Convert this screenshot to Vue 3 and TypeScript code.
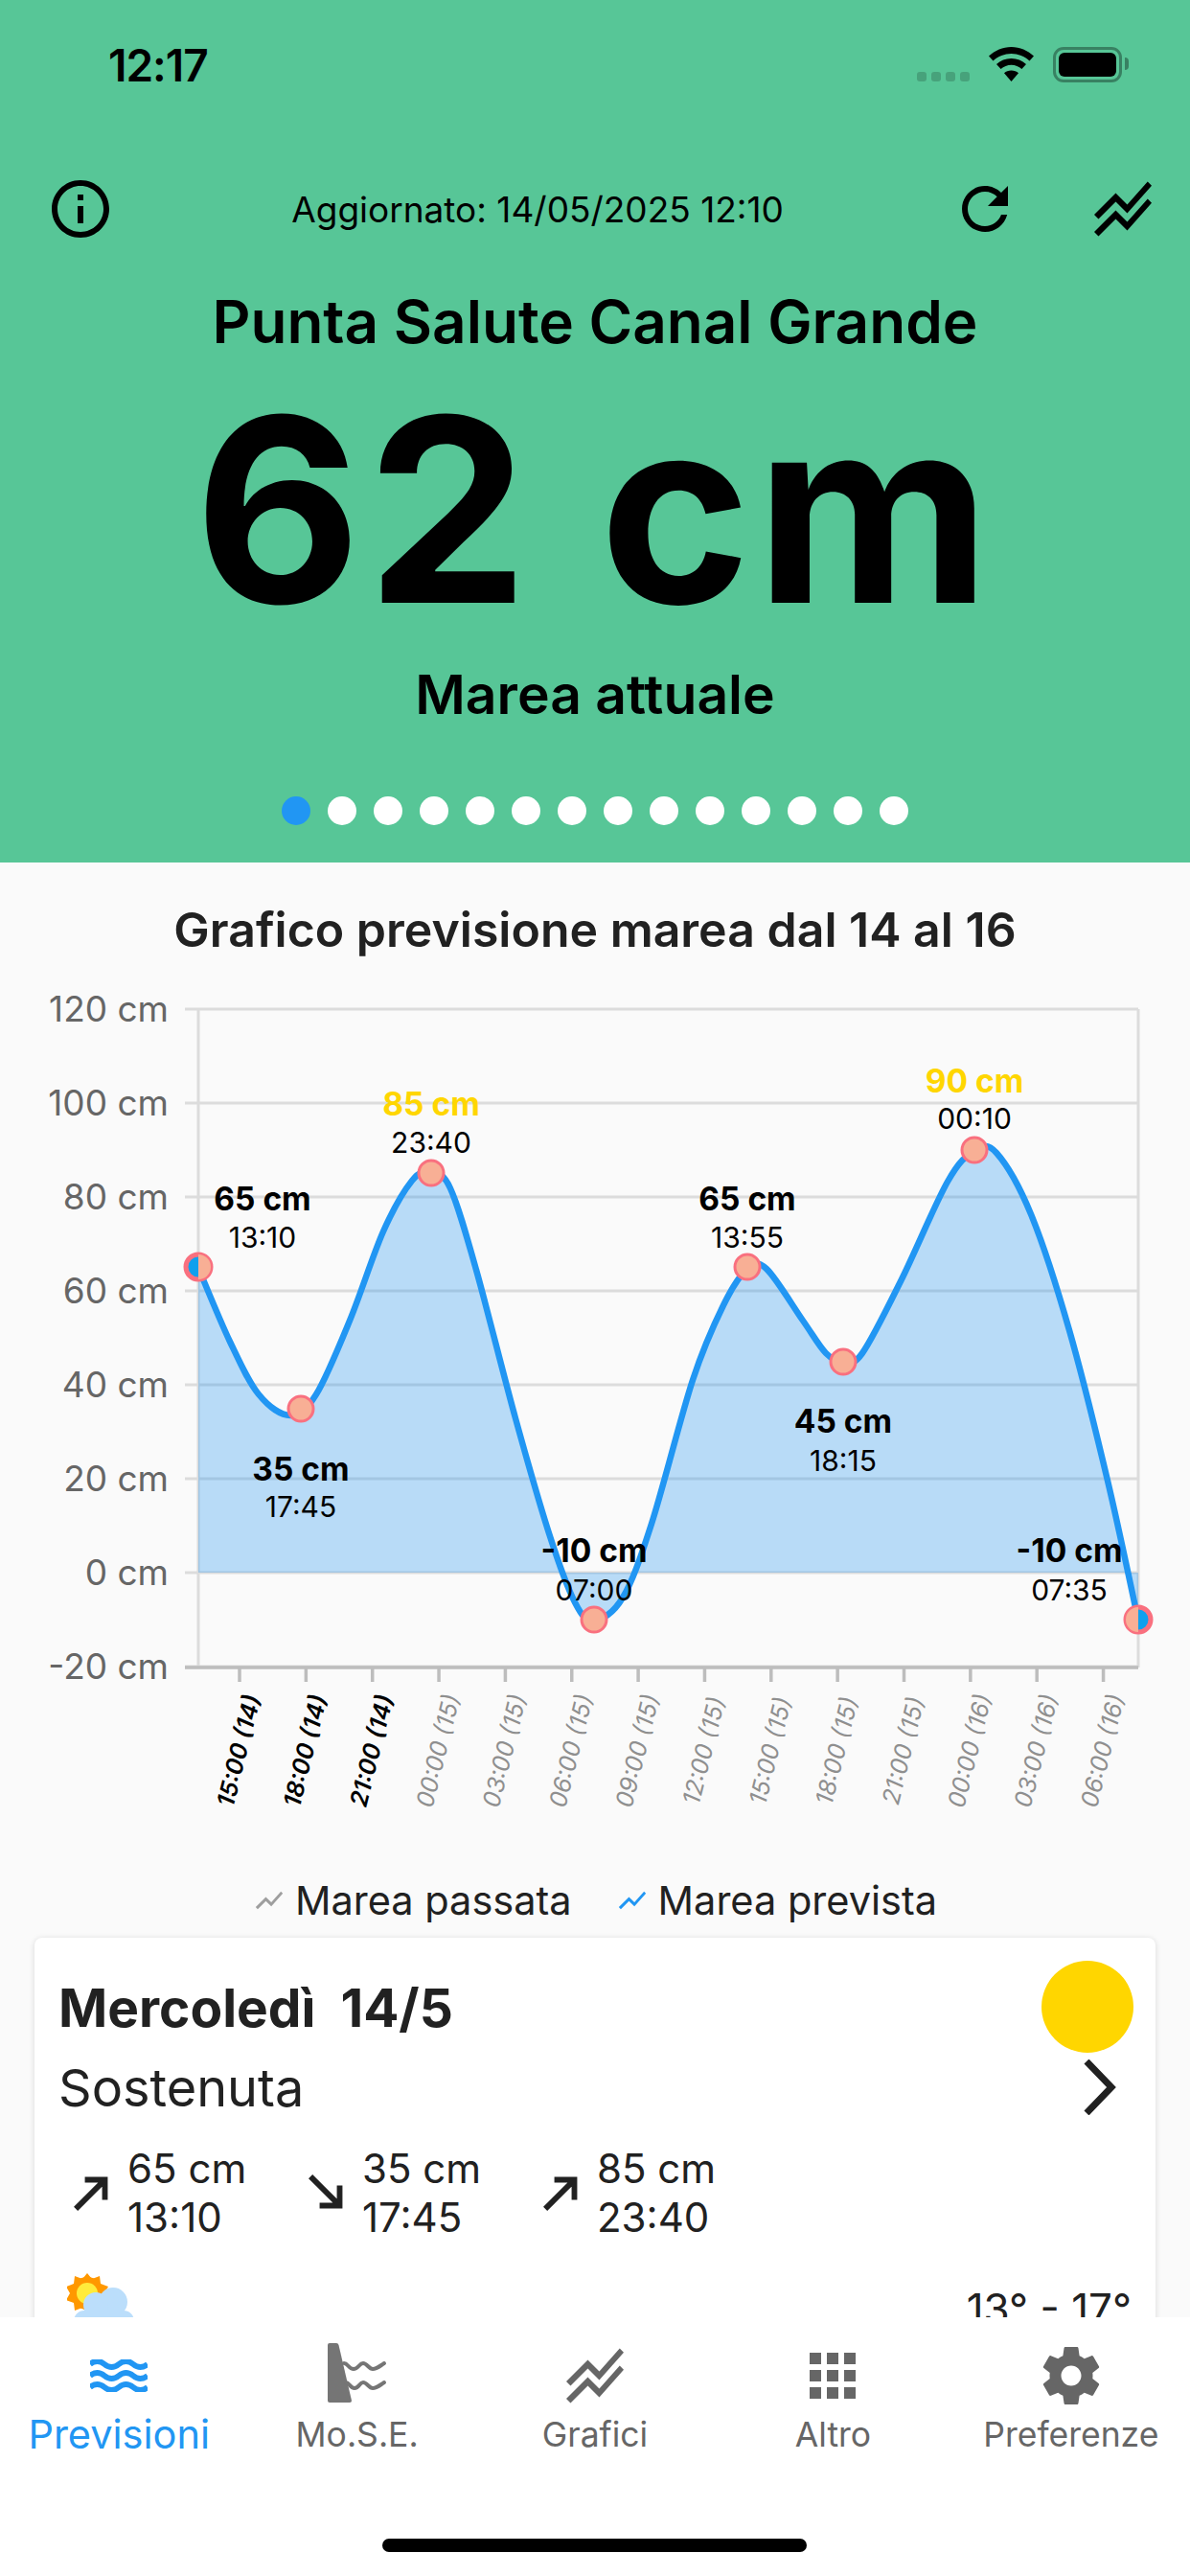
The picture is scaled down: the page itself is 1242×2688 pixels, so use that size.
<script setup lang="ts">
interface Tick {
  label: string
  past: boolean
}

interface Peak {
  x: number
  y: number
  value: string
  time: string
  valueY: number
  timeY: number
  high?: boolean
}

const gridValues = [120, 100, 80, 60, 40, 20, 0, -20]
const yFor = (v: number) => 1053 + (120 - v) * 4.9

const curve: [number, number][] = [
  [207, 1323], [240, 1400], [270, 1455], [303, 1477], [330, 1455], [365, 1378], [400, 1285],
  [430, 1232], [450, 1223], [470, 1240], [497, 1325], [538, 1480], [573, 1600], [600, 1672],
  [620, 1691], [650, 1667], [680, 1590], [723, 1440], [755, 1362], [780, 1324], [800, 1324],
  [838, 1378], [862, 1412], [880, 1421], [900, 1412], [941, 1335], [989, 1233], [1017, 1201],
  [1040, 1203], [1076, 1267], [1116, 1388], [1156, 1545], [1188, 1691]
]

// catmull-rom through the sampled points
const buildPath = (pts: [number, number][]) => {
  let d = `M${pts[0][0]} ${pts[0][1]}`
  for (let i = 0; i < pts.length - 1; i++) {
    const p0 = pts[i - 1] ?? pts[i]
    const p1 = pts[i]
    const p2 = pts[i + 1]
    const p3 = pts[i + 2] ?? p2
    const c1x = p1[0] + (p2[0] - p0[0]) / 6
    const c1y = p1[1] + (p2[1] - p0[1]) / 6
    const c2x = p2[0] - (p3[0] - p1[0]) / 6
    const c2y = p2[1] - (p3[1] - p1[1]) / 6
    d += `C${c1x.toFixed(1)} ${c1y.toFixed(1)} ${c2x.toFixed(1)} ${c2y.toFixed(1)} ${p2[0]} ${p2[1]}`
  }
  return d
}

const linePath = buildPath(curve)
const areaPath = `M207 ${yFor(0)}L207 1323${linePath.slice(linePath.indexOf('C'))}L1188 ${yFor(0)}Z`

const hours = ['15:00 (14)', '18:00 (14)', '21:00 (14)', '00:00 (15)', '03:00 (15)', '06:00 (15)', '09:00 (15)', '12:00 (15)', '15:00 (15)', '18:00 (15)', '21:00 (15)', '00:00 (16)', '03:00 (16)', '06:00 (16)']
const ticks: Tick[] = hours.map((label, i) => ({ label, past: i < 3 }))
const tickX = (i: number) => 250 + i * 69.35

const peaks: Peak[] = [
  { x: 207, y: 1322, value: '65 cm', time: '13:10', valueY: 1263, timeY: 1302 },
  { x: 314, y: 1470, value: '35 cm', time: '17:45', valueY: 1545, timeY: 1583 },
  { x: 450, y: 1224, value: '85 cm', time: '23:40', valueY: 1164, timeY: 1203, high: true },
  { x: 620, y: 1690, value: '-10 cm', time: '07:00', valueY: 1630, timeY: 1670 },
  { x: 780, y: 1322, value: '65 cm', time: '13:55', valueY: 1263, timeY: 1302 },
  { x: 880, y: 1421, value: '45 cm', time: '18:15', valueY: 1495, timeY: 1535 },
  { x: 1017, y: 1200, value: '90 cm', time: '00:10', valueY: 1140, timeY: 1178, high: true },
  { x: 1188, y: 1690, value: '-10 cm', time: '07:35', valueY: 1630, timeY: 1670 }
]
const labelX = (p: Peak) => (p.x === 207 ? 274 : p.x === 1188 ? 1116 : p.x)

const tides = [
  { up: true, value: '65 cm', time: '13:10' },
  { up: false, value: '35 cm', time: '17:45' },
  { up: true, value: '85 cm', time: '23:40' }
]
const dots = Array.from({ length: 14 }, (_, i) => i)
const dayLabel = 'Mercoledì  14/5'
</script>

<template>
  <div class="page">
    <header class="hero">
      <div class="status">
        <span class="clock">12:17</span>
        <div class="status__right">
          <div class="signal"><i v-for="n in 4" :key="n"></i></div>
          <svg class="wifi" viewBox="0 0 47 36">
            <path d="M23.5 0C14.5 0 6.5 3.6 0 9.5l4.5 5C9.8 9.8 16.3 7 23.5 7s13.7 2.800 19 7.500l4.500-5C40.500 3.600 32.500 0 23.500 0z" />
            <path d="M23.500 12c-6 0-11.300 2.300-15.500 6l4.600 5c3-2.600 6.800-4.200 10.900-4.200s7.900 1.600 10.900 4.200l4.600-5c-4.200-3.700-9.500-6-15.500-6z" />
            <path d="M23.500 24.500c-3 0-5.500 1-7.500 2.800L23.500 36l7.500-8.700c-2-1.800-4.500-2.800-7.500-2.800z" />
          </svg>
          <div class="battery"><div class="battery__fill"></div></div>
        </div>
      </div>

      <div class="toolbar">
        <svg class="toolbar__icon" viewBox="0 0 24 24"><path d="M11 7h2v2h-2zm0 4h2v6h-2zm1-9C6.48 2 2 6.48 2 12s4.48 10 10 10 10-4.48 10-10S17.520 2 12 2zm0 18c-4.410 0-8-3.590-8-8s3.590-8 8-8 8 3.590 8 8-3.590 8-8 8z" /></svg>
        <span class="toolbar__date">Aggiornato: 14/05/2025 12:10</span>
        <svg class="toolbar__icon toolbar__icon--refresh" viewBox="0 0 24 24"><path d="M17.650 6.350C16.200 4.900 14.210 4 12 4c-4.420 0-7.990 3.580-7.990 8s3.570 8 7.990 8c3.730 0 6.840-2.550 7.730-6h-2.080c-.82 2.330-3.040 4-5.650 4-3.310 0-6-2.690-6-6s2.690-6 6-6c1.660 0 3.140.69 4.220 1.780L13 11h7V4l-2.350 2.350z" /></svg>
        <svg class="toolbar__icon" viewBox="0 0 24 24"><path d="M2 19.990l7.500-7.510 4 4 7.090-7.970L22 9.920l-8.500 9.560-4-4-6 6.010L2 19.990zM3.500 15.490l6-6.010 4 4L22 3.920l-1.410-1.410-7.090 7.970-4-4L2 13.990l1.500 1.500z" /></svg>
      </div>

      <h1 class="hero__station">Punta Salute Canal Grande</h1>
      <div class="hero__level">62 cm</div>
      <div class="hero__caption">Marea attuale</div>
      <div class="pager">
        <span v-for="d in dots" :key="d" class="pager__dot" :class="{ isActive: d === 0 }"></span>
      </div>
    </header>

    <main class="scroller">
      <h2 class="chart-title">Grafico previsione marea dal 14 al 16</h2>
      <svg class="chart" viewBox="0 1010 1242 930">
        <defs>
          <clipPath id="plot"><rect x="207" y="1000" width="981" height="800" /></clipPath>
        </defs>
        <g v-for="v in gridValues" :key="v">
          <line class="grid" x1="193" x2="1188" :y1="yFor(v)" :y2="yFor(v)" />
          <text class="axis-y" x="176" :y="yFor(v) + 13">{{ v }} cm</text>
        </g>
        <line class="grid" x1="207" x2="207" y1="1053" y2="1740" />
        <line class="grid" x1="1188" x2="1188" y1="1053" y2="1740" />
        <line class="axis" x1="193" x2="1188" y1="1740" y2="1740" />
        <path :d="areaPath" class="area" />
        <path :d="linePath" class="line" />

        <g v-for="(t, i) in ticks" :key="i">
          <line class="axis" :x1="tickX(i)" :x2="tickX(i)" y1="1740" y2="1755" />
          <text
            class="axis-x"
            :class="{ isPast: t.past }"
            :x="tickX(i)"
            y="1835"
            :transform="`rotate(-76 ${tickX(i)} 1827)`"
          >{{ t.label }}</text>
        </g>

        <g v-for="(p, i) in peaks" :key="'p' + i">
          <circle v-if="p.x === 207 || p.x === 1188" class="marker-end" :cx="p.x" :cy="p.y" r="13" />
          <circle
            class="marker"
            :class="{ isEdge: p.x === 207 || p.x === 1188 }"
            :cx="p.x"
            :cy="p.y"
            r="13"
            clip-path="url(#plot)"
          />
          <text class="peak-value" :class="{ isHigh: p.high }" :x="labelX(p)" :y="p.valueY">{{ p.value }}</text>
          <text class="peak-time" :x="labelX(p)" :y="p.timeY">{{ p.time }}</text>
        </g>
      </svg>

      <div class="legend">
        <div class="legend__item">
          <svg class="legend__icon legend__icon--past" viewBox="0 0 24 24"><path d="M3.500 18.490l6-6.010 4 4L22 6.920l-1.410-1.410-7.090 7.970-4-4L2 16.990z" /></svg>
          <span>Marea passata</span>
        </div>
        <div class="legend__item">
          <svg class="legend__icon legend__icon--next" viewBox="0 0 24 24"><path d="M3.500 18.490l6-6.010 4 4L22 6.920l-1.410-1.410-7.090 7.970-4-4L2 16.990z" /></svg>
          <span>Marea prevista</span>
        </div>
      </div>

      <section class="card">
        <div class="card__head">
          <div>
            <div class="card__day">{{ dayLabel }}</div>
            <div class="card__state">Sostenuta</div>
          </div>
          <div class="card__side">
            <div class="card__sun"></div>
            <svg class="card__chevron" viewBox="0 0 35 58"><path d="M4 2l26 27L4 56" /></svg>
          </div>
        </div>
        <div class="tides">
          <div v-for="t in tides" :key="t.time" class="tide">
            <svg class="tide__arrow" viewBox="0 0 24 24">
              <path v-if="t.up" d="M9 5v2h6.590L4 18.590 5.410 20 17 8.410V15h2V5z" />
              <path v-else d="M19 9h-2v6.590L5.410 4 4 5.410 15.590 17H9v2h10z" />
            </svg>
            <div class="tide__text">
              <div>{{ t.value }}</div>
              <div>{{ t.time }}</div>
            </div>
          </div>
        </div>
        <div class="weather">
          <svg class="weather__icon" viewBox="0 0 74 74">
            <circle cx="21" cy="21" r="17" fill="#ff9800" />
            <path d="M21 0l5 6 8-3 1 8 8 3-4 7 4 7-8 3-1 8-8-3-5 6-5-6-8 3-1-8-8-3 4-7-4-7 8-3 1-8 8 3z" fill="#ff9800" />
            <circle cx="21" cy="21" r="11" fill="#ffeb3b" />
            <g fill="#bbdefb">
              <circle cx="48" cy="30" r="15" />
              <circle cx="30" cy="33" r="13" />
              <circle cx="18" cy="50" r="11" />
              <circle cx="59" cy="50" r="11" />
              <rect x="18" y="38" width="41" height="24" />
            </g>
          </svg>
          <span class="weather__temp">13° - 17°</span>
        </div>
      </section>
    </main>

    <nav class="tabbar">
      <div class="tabs">
        <div class="tab isActive">
          <svg class="tab__icon tab__icon--waves" viewBox="0 0 60 34">
            <path d="M0 5q7.500-6 15 0t15 0 15 0 15 0M0 17q7.500-6 15 0t15 0 15 0 15 0M0 29q7.500-6 15 0t15 0 15 0 15 0" />
          </svg>
          <span class="tab__label">Previsioni</span>
        </div>
        <div class="tab">
          <svg class="tab__icon tab__icon--mose" viewBox="0 0 62 62">
            <path class="mose-wall" d="M2 0h7q2 0 2.500 2L25 60q0 2-2 2H2q-2 0-2-2V2q0-2 2-2z" />
            <path class="mose-wave" d="M17 21c4 0 5 6 10 6s6-6 10-6 6 6 10 6 6-2 12-6M19 41c4 0 4 6 9 6s5-6 9-6 6 6 10 6 6-2 12-6" />
          </svg>
          <span class="tab__label">Mo.S.E.</span>
        </div>
        <div class="tab">
          <svg class="tab__icon" viewBox="0 0 24 24"><path d="M2 19.990l7.500-7.510 4 4 7.090-7.970L22 9.920l-8.500 9.560-4-4-6 6.010L2 19.990zM3.500 15.490l6-6.010 4 4L22 3.920l-1.410-1.410-7.090 7.970-4-4L2 13.990l1.500 1.500z" /></svg>
          <span class="tab__label">Grafici</span>
        </div>
        <div class="tab">
          <svg class="tab__icon" viewBox="0 0 24 24"><path d="M4 8h4V4H4v4zm6 12h4v-4h-4v4zm-6 0h4v-4H4v4zm0-6h4v-4H4v4zm6 0h4v-4h-4v4zm6-10v4h4V4h-4zm-6 4h4V4h-4v4zm6 6h4v-4h-4v4zm0 6h4v-4h-4v4z" /></svg>
          <span class="tab__label">Altro</span>
        </div>
        <div class="tab">
          <svg class="tab__icon" viewBox="0 0 24 24"><path d="M19.430 12.980c.04-.32.07-.64.07-.98s-.03-.66-.07-.98l2.110-1.650c.19-.15.24-.42.12-.64l-2-3.460c-.12-.22-.39-.3-.61-.22l-2.490 1c-.52-.4-1.080-.73-1.690-.98l-.38-2.650C14.460 2.180 14.250 2 14 2h-4c-.25 0-.46.18-.49.42l-.38 2.650c-.61.25-1.170.59-1.690.98l-2.490-1c-.23-.09-.49 0-.61.22l-2 3.460c-.13.22-.07.49.12.64l2.110 1.650c-.04.32-.07.65-.07.98s.03.66.07.98l-2.110 1.650c-.19.15-.24.42-.12.64l2 3.460c.12.22.39.3.61.22l2.490-1c.52.4 1.080.73 1.690.98l.38 2.650c.03.24.24.42.49.42h4c.25 0 .46-.18.49-.42l.38-2.650c.61-.25 1.170-.59 1.690-.98l2.490 1c.23.09.49 0 .61-.22l2-3.460c.12-.22.07-.49-.12-.64l-2.110-1.650zM12 15.500c-1.930 0-3.500-1.570-3.500-3.500s1.570-3.500 3.500-3.500 3.500 1.570 3.500 3.500-1.570 3.500-3.500 3.500z" /></svg>
          <span class="tab__label">Preferenze</span>
        </div>
      </div>
      <div class="home-bar"></div>
    </nav>
  </div>
</template>

<style scoped>
.page {
  display: flex;
  flex-direction: column;
  width: 1242px;
  height: 2688px;
  overflow: hidden;
  background: #fafafa;
  font-family: Inter, "Liberation Sans", sans-serif;
  color: #212121;
}

.hero {
  flex: none;
  display: flex;
  flex-direction: column;
  align-items: center;
  height: 900px;
  background: #57c697;
  color: #000;
}

.status {
  display: flex;
  justify-content: space-between;
  align-items: flex-start;
  width: 100%;
  height: 182px;
  padding: 49px 71px 0 113px;
  box-sizing: border-box;
}

.clock {
  margin-top: -4px;
  font-size: 46px;
  font-weight: 600;
  line-height: 46px;
  letter-spacing: -1px;
}

.status__right {
  display: flex;
  align-items: flex-start;
}

.signal {
  display: flex;
  gap: 5px;
  margin-top: 26px;
  margin-right: 20px;
}

.signal i {
  display: block;
  width: 10px;
  height: 10px;
  border-radius: 3px;
  background: rgba(0, 0, 0, 0.18);
}

.wifi {
  width: 47px;
  height: 36px;
  margin-right: 20px;
}

.battery {
  position: relative;
  width: 72px;
  height: 37px;
  box-sizing: border-box;
  border: 3px solid rgba(0, 0, 0, 0.35);
  border-radius: 11px;
  padding: 3px;
}

.battery::after {
  content: "";
  position: absolute;
  right: -10px;
  top: 8px;
  width: 4px;
  height: 13px;
  border-radius: 0 4px 4px 0;
  background: rgba(0, 0, 0, 0.35);
}

.battery__fill {
  height: 100%;
  border-radius: 6px;
  background: #000;
}

.toolbar {
  display: flex;
  align-items: center;
  width: 100%;
  height: 72px;
  padding: 0 34px 0 48px;
  box-sizing: border-box;
}

.toolbar__icon {
  flex: none;
  width: 72px;
  height: 72px;
}

.toolbar__icon--refresh {
  margin-right: 72px;
}

.toolbar__date {
  flex: 1;
  text-align: center;
  font-size: 37px;
  padding-left: 10px;
  white-space: nowrap;
}

.hero__station {
  margin: 48px 0 0;
  font-size: 62px;
  line-height: 68px;
  font-weight: 600;
}

.hero__level {
  margin-top: 28px;
  font-size: 268px;
  line-height: 268px;
  font-weight: 700;
  letter-spacing: 5.5px;
}

.hero__caption {
  margin-top: 28px;
  font-size: 57px;
  line-height: 62px;
  font-weight: 600;
}

.pager {
  display: flex;
  gap: 18px;
  margin-top: 75px;
}

.pager__dot {
  width: 30px;
  height: 30px;
  border-radius: 50%;
  background: #fff;
}

.pager__dot.isActive {
  background: #2196f3;
}

.scroller {
  flex: 1;
  min-height: 0;
  overflow: hidden;
}

.chart-title {
  margin: 44px 0 0;
  font-size: 50px;
  line-height: 52px;
  font-weight: 600;
  text-align: center;
}

.chart {
  display: block;
  width: 1242px;
  height: 930px;
  margin-top: 14px;
}

.grid {
  stroke: #dcdcdc;
  stroke-width: 3;
}

.axis {
  stroke: #bdbdbd;
  stroke-width: 3.500;
}

.area {
  fill: rgba(33, 150, 243, 0.3);
}

.line {
  fill: none;
  stroke: #2196f3;
  stroke-width: 6.500;
}

.axis-y {
  font-size: 37px;
  fill: #666;
  text-anchor: end;
}

.axis-x {
  font-size: 25px;
  font-style: italic;
  fill: #8f8f8f;
  text-anchor: middle;
}

.axis-x.isPast {
  font-weight: 600;
  fill: #000;
}

.marker {
  fill: #f8af95;
  stroke: #f9707f;
  stroke-width: 3;
}

.marker.isEdge {
  stroke: none;
}

.marker-end {
  fill: #0fa0ee;
  stroke: #f9707f;
  stroke-width: 5;
}

.peak-value {
  font-size: 33.500px;
  font-weight: 700;
  fill: #000;
  text-anchor: middle;
}

.peak-value.isHigh {
  fill: #ffd600;
}

.peak-time {
  font-size: 30px;
  fill: #000;
  text-anchor: middle;
}

.legend {
  display: flex;
  justify-content: center;
  align-items: center;
  gap: 46px;
  height: 60px;
  margin-top: 13px;
  font-size: 41.500px;
}

.legend__item {
  display: flex;
  align-items: center;
  gap: 10px;
}

.legend__icon {
  width: 34px;
  height: 34px;
}

.legend__icon--past {
  fill: #9e9e9e;
}

.legend__icon--next {
  fill: #2196f3;
}

.card {
  box-sizing: border-box;
  margin: 9px 36px 0;
  height: 500px;
  padding: 41px 25px 0 25px;
  background: #fff;
  border-radius: 8px;
  box-shadow: 0 1px 6px rgba(0, 0, 0, 0.14);
}

.card__head {
  display: flex;
  justify-content: space-between;
}

.card__day {
  font-size: 55px;
  line-height: 64px;
  font-weight: 700;
  white-space: pre;
}

.card__state {
  margin-top: 20px;
  font-size: 54px;
  line-height: 64px;
}

.card__side {
  display: flex;
  flex-direction: column;
  align-items: flex-end;
  margin-top: -17px;
}

.card__sun {
  width: 96px;
  height: 96px;
  border-radius: 50%;
  background: #ffd600;
  margin-right: -2px;
}

.card__chevron {
  width: 35px;
  height: 58px;
  margin: 7px 16px 0 0;
  fill: none;
  stroke: #212121;
  stroke-width: 7;
}

.tides {
  display: flex;
  margin-top: 26px;
}

.tide {
  display: flex;
  align-items: center;
  width: 245px;
}

.tide__arrow {
  flex: none;
  width: 54px;
  height: 54px;
  margin: 0 0 0 8px;
  fill: #212121;
  stroke: #212121;
  stroke-width: 0.6;
}

.tide__text {
  margin-left: 10px;
  font-size: 42px;
  line-height: 51px;
}

.weather {
  display: flex;
  justify-content: space-between;
  margin-top: 33px;
}

.weather__icon {
  width: 74px;
  height: 74px;
  margin-left: 9px;
}

.weather__temp {
  margin-top: 12px;
  font-size: 44px;
  line-height: 50px;
}

.tabbar {
  flex: none;
  position: relative;
  height: 270px;
  background: #fff;
}

.tabs {
  display: flex;
  padding-top: 25px;
}

.tab {
  flex: 1;
  display: flex;
  flex-direction: column;
  align-items: center;
  color: #666;
  fill: #666;
}

.tab__icon {
  width: 72px;
  height: 72px;
}

.tab__label {
  margin-top: 5px;
  font-size: 35.500px;
  line-height: 42px;
  white-space: nowrap;
}

.tab.isActive {
  color: #2196f3;
}

.tab.isActive .tab__label {
  margin-top: 2px;
  font-size: 41.500px;
  line-height: 46px;
}

.tab__icon--waves {
  width: 60px;
  height: 34px;
  margin-top: 19px;
  margin-bottom: 19px;
  fill: none;
  stroke: #2196f3;
  stroke-width: 6;
}

.tab__icon--mose {
  width: 62px;
  height: 62px;
  margin-top: 2px;
  margin-bottom: 8px;
}

.mose-wall {
  fill: #757575;
}

.mose-wave {
  fill: none;
  stroke: #757575;
  stroke-width: 4;
  stroke-linecap: round;
}

.home-bar {
  position: absolute;
  left: 399px;
  top: 231px;
  width: 443px;
  height: 14px;
  border-radius: 7px;
  background: #000;
}
</style>

<style>
body {
  background: #fafafa;
}
</style>
